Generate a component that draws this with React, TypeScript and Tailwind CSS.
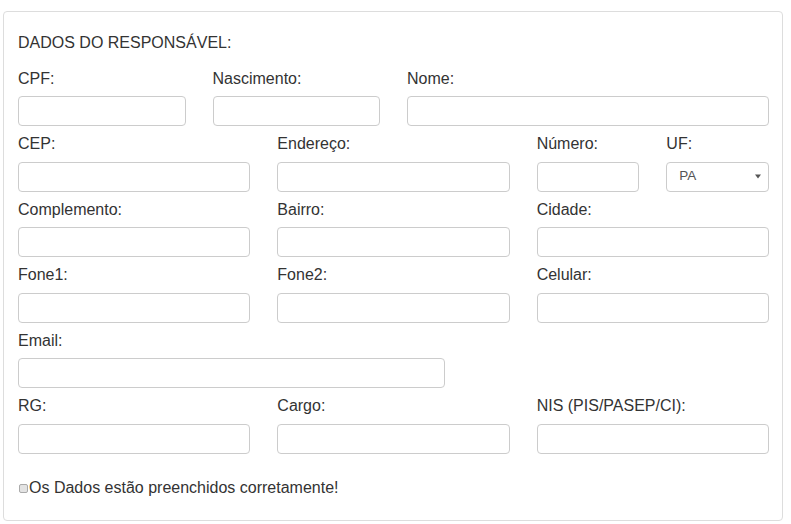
import React from 'react'

type Field = { label: string; span: string; select?: boolean }

const rows: Field[][] = [
  [
    { label: 'CPF:', span: 'col-span-3' },
    { label: 'Nascimento:', span: 'col-span-3' },
    { label: 'Nome:', span: 'col-span-6' },
  ],
  [
    { label: 'CEP:', span: 'col-span-4' },
    { label: 'Endereço:', span: 'col-span-4' },
    { label: 'Número:', span: 'col-span-2' },
    { label: 'UF:', span: 'col-span-2', select: true },
  ],
  [
    { label: 'Complemento:', span: 'col-span-4' },
    { label: 'Bairro:', span: 'col-span-4' },
    { label: 'Cidade:', span: 'col-span-4' },
  ],
  [
    { label: 'Fone1:', span: 'col-span-4' },
    { label: 'Fone2:', span: 'col-span-4' },
    { label: 'Celular:', span: 'col-span-4' },
  ],
  [{ label: 'Email:', span: 'col-span-7' }],
  [
    { label: 'RG:', span: 'col-span-4' },
    { label: 'Cargo:', span: 'col-span-4' },
    { label: 'NIS (PIS/PASEP/CI):', span: 'col-span-4' },
  ],
]

function App() {
  return (
    <div className="w-[791px] h-[524px] bg-white font-['Liberation_Sans',Arial,sans-serif] text-[#333] text-[16px]">
      <div className="ml-[3px] pt-[11px]">
        <div className="w-[780px] h-[510px] border border-[#ddd] rounded-[4px] pl-[14px] pr-[13px] pt-[20px]">
          <div className="leading-[22px] mb-[13.5px]">DADOS DO RESPONSÁVEL:</div>
          <div className="flex flex-col gap-y-[7px]">
            {rows.map((row, i) => (
              <div key={i} className="grid grid-cols-12 gap-x-[27px]">
                {row.map((f) => (
                  <div key={f.label} className={f.span}>
                    <div className="leading-[22px] mb-[6.5px]">{f.label}</div>
                    {f.select ? (
                      <div className="h-[30px] border border-[#ccc] rounded-[4px] flex items-center justify-between pl-[12px] pr-[7px] text-[13.5px] text-[#555]">
                        <span>PA</span>
                        <svg width="6" height="5" viewBox="0 0 6 5">
                          <path d="M0 0.5 L6 0.5 L3 4.5 Z" fill="#555" />
                        </svg>
                      </div>
                    ) : (
                      <div className="h-[30px] border border-[#ccc] rounded-[4px]" />
                    )}
                  </div>
                ))}
              </div>
            ))}
          </div>
          <div className="mt-[23px] flex items-center leading-[22px]">
            <span className="ml-[1px] w-[9px] h-[9px] border border-[#aaa] bg-[#e3e3e3] rounded-[2px] mt-[1px]" />
            <span className="ml-[1px]">Os Dados estão preenchidos corretamente!</span>
          </div>
        </div>
      </div>
    </div>
  )
}

export default App
